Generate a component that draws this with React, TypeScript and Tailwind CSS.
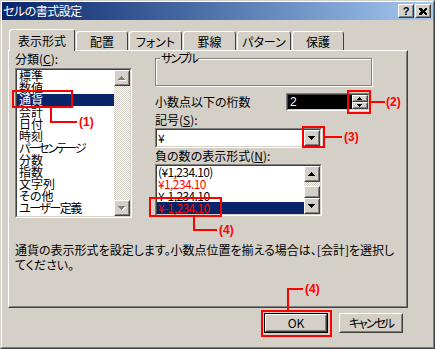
import React from 'react'

const font = "font-['Noto_Sans_CJK_JP','Noto_Sans_CJK_SC',sans-serif] [font-feature-settings:'palt']"
const checker =
  'bg-[image:repeating-conic-gradient(#ffffff_0%_25%,#d4d0c8_0%_50%)] bg-[length:2px_2px]'

function Raised({ className = '', children }: { className?: string; children?: React.ReactNode }) {
  return (
    <div className={`border border-t-white border-l-white border-r-[#404040] border-b-[#404040] bg-[#d4d0c8] ${className}`}>
      <div className="w-full h-full border border-transparent border-r-[#808080] border-b-[#808080] flex items-center justify-center">
        {children}
      </div>
    </div>
  )
}

function Sunken({ className = '', inner = '', children }: { className?: string; inner?: string; children?: React.ReactNode }) {
  return (
    <div className={`border border-t-[#808080] border-l-[#808080] border-r-white border-b-white ${className}`}>
      <div className={`w-full h-full border border-t-[#404040] border-l-[#404040] border-r-[#d4d0c8] border-b-[#d4d0c8] ${inner}`}>
        {children}
      </div>
    </div>
  )
}

function Arrow({ dir, disabled = false, small = false }: { dir: 'up' | 'down'; disabled?: boolean; small?: boolean }) {
  const w = small ? 5 : 7
  const h = small ? 3 : 4
  const pts = dir === 'up' ? `0,${h} ${w},${h} ${w / 2},0` : `0,0 ${w},0 ${w / 2},${h}`
  return (
    <svg width={w + 1} height={h + 1} viewBox={`0 0 ${w + 1} ${h + 1}`} shapeRendering="crispEdges">
      {disabled && <polygon points={pts} transform="translate(1,1)" fill="#ffffff" />}
      <polygon points={pts} fill={disabled ? '#808080' : '#000000'} />
    </svg>
  )
}

function Redbox({ className }: { className: string }) {
  return <div className={`absolute border-2 border-[#ff0000] ${className}`} />
}

function Line({ className }: { className: string }) {
  return <div className={`absolute bg-[#ff0000] ${className}`} />
}

function Tag({ className, n }: { className: string; n: number }) {
  return (
    <div className={`absolute font-['Liberation_Sans',sans-serif] font-bold text-[12px] leading-[14px] text-[#ff0000] ${className}`}>
      ({n})
    </div>
  )
}

// kana-heavy entries are squeezed a little, the original bitmap font sets kana narrow
const categories = [
  { t: '標準' },
  { t: '数値' },
  { t: '通貨', selected: true },
  { t: '会計' },
  { t: '日付' },
  { t: '時刻' },
  { t: 'パーセンテージ', tight: 'tracking-[-2px]' },
  { t: '分数' },
  { t: '指数' },
  { t: '文字列' },
  { t: 'その他' },
  { t: 'ユーザー定義', tight: 'tracking-[-1.5px]' },
]

const negatives = [
  { text: '(¥1,234.10)', red: false },
  { text: '¥1,234.10', red: true },
  { text: '¥-1,234.10', red: false },
  { text: '¥-1,234.10', red: true, selected: true },
]

export default function App() {
  return (
    <div className={`relative w-[435px] h-[349px] overflow-hidden bg-[#d4d0c8] text-[12px] text-black ${font}`}>
      <div className="w-full h-full border border-t-[#d4d0c8] border-l-[#d4d0c8] border-r-[#404040] border-b-[#404040]">
        <div className="w-full h-full border border-t-white border-l-white border-r-[#808080] border-b-[#808080]">
          {/* Title bar */}
          <div className="h-[18px] flex items-center bg-gradient-to-r from-[#0a246a] to-[#a6caf0] pl-[1px] pr-[2px]">
            <span className="text-white text-[12px] leading-[18px] tracking-[-0.5px]">セルの書式設定</span>
            <div className="ml-auto flex gap-[1px]">
              <Raised className="w-[16px] h-[14px]">
                <span className="font-['Liberation_Sans',sans-serif] font-bold text-[11px] leading-[10px]">?</span>
              </Raised>
              <Raised className="w-[16px] h-[14px]">
                <svg width="8" height="7" viewBox="0 0 8 7" shapeRendering="crispEdges">
                  <path d="M0 0h2l2 2 2-2h2v1L6 3.5 8 6v1H6L4 5 2 7H0V6l2-2.5L0 1z" fill="#000" />
                </svg>
              </Raised>
            </div>
          </div>

          <div className="pl-[6px] pt-[9px]">
            {/* Tabs */}
            <div className="relative z-10 flex items-end gap-[1px] h-[21px]">
              <div className="ml-[1px] w-[66px] h-[22px] -mb-[1px] bg-[#d4d0c8] border-t border-l border-white border-r border-r-[#404040] rounded-t-[3px] flex justify-center pt-[4px] leading-[14px]">
                表示形式
              </div>
              {[
                ['配置', 'w-[52px]'],
                ['フォント', 'w-[53px]'],
                ['罫線', 'w-[53px]'],
                ['パターン', 'w-[54px]'],
                ['保護', 'w-[52px]'],
              ].map(([t, w]) => (
                <div
                  key={t}
                  className={`${w} h-[19px] border-t border-l border-white border-r border-r-[#404040] rounded-t-[3px] flex justify-center pt-[3px] leading-[14px]`}
                >
                  {t}
                </div>
              ))}
            </div>

            {/* Panel */}
            <div className="w-[400px] h-[258px] border border-t-white border-l-white border-r-[#404040] border-b-[#404040]">
              <div className="w-full h-full border border-transparent border-r-[#808080] border-b-[#808080] pl-[5px]">
                <div className="flex gap-[23px]">
                  {/* Left column */}
                  <div className="w-[117px]">
                    <div className="h-[16px] leading-[14px]">
                      分類(<span className="underline">C</span>):
                    </div>
                    <Sunken className="h-[150px]" inner="bg-white flex">
                      <div className="flex-1 flex flex-col">
                        {categories.map((c) => (
                          <div
                            key={c.t}
                            className={`h-[12px] leading-[12px] pl-[2px] whitespace-nowrap ${c.tight ?? ''} ${c.selected ? 'bg-[#0a246a] text-white' : ''}`}
                          >
                            {c.t}
                          </div>
                        ))}
                      </div>
                      <div className="w-[16px] flex flex-col">
                        <Raised className="h-[16px]">
                          <Arrow dir="up" disabled />
                        </Raised>
                        <div className={`flex-1 ${checker}`} />
                        <Raised className="h-[16px]">
                          <Arrow dir="down" disabled />
                        </Raised>
                      </div>
                    </Sunken>
                  </div>

                  {/* Right column */}
                  <div className="w-[217px]">
                    <div className="relative mt-[6px] h-[28px] border border-[#808080] shadow-[1px_1px_0_#ffffff,inset_1px_1px_0_#ffffff]">
                      <span className="absolute -top-[7px] left-[4px] bg-[#d4d0c8] px-[1px] leading-[12px] tracking-[-2px]">サンプル</span>
                    </div>

                    <div className="mt-[7px] flex items-center pr-[2px]">
                      <span className="leading-[14px]">小数点以下の桁数</span>
                      <Sunken className="ml-auto w-[84px] h-[18px]" inner="bg-black flex items-center">
                        <span className="flex-1 pl-[2px] text-white leading-[12px] font-['Liberation_Sans',sans-serif]">2</span>
                        <div className="w-[16px] h-full flex flex-col">
                          <Raised className="h-[7px]">
                            <Arrow dir="up" small />
                          </Raised>
                          <Raised className="h-[7px]">
                            <Arrow dir="down" small />
                          </Raised>
                        </div>
                      </Sunken>
                    </div>

                    <div className="mt-[1px] h-[16px] leading-[16px]">
                      記号(<span className="underline">S</span>):
                    </div>
                    <Sunken className="w-[167px] h-[20px]" inner="bg-white flex items-center">
                      <span className="flex-1 pl-[1px] leading-[12px]">¥</span>
                      <Raised className="w-[16px] h-[16px]">
                        <Arrow dir="down" />
                      </Raised>
                    </Sunken>

                    <div className="h-[16px] leading-[16px]">
                      負の数の表示形式(<span className="underline">N</span>):
                    </div>
                    <Sunken className="w-[167px] h-[52px]" inner="bg-white flex">
                      <div className="flex-1 flex flex-col">
                        {negatives.map((n, i) => (
                          <div
                            key={i}
                            className={`h-[12px] leading-[12px] pl-[1px] tracking-[-0.6px] ${n.selected ? 'bg-[#0a246a]' : ''} ${n.red ? 'text-[#ff0000]' : 'text-black'}`}
                          >
                            {n.text}
                          </div>
                        ))}
                      </div>
                      <div className="w-[16px] flex flex-col">
                        <Raised className="h-[16px]">
                          <Arrow dir="up" />
                        </Raised>
                        <div className={`h-[4px] ${checker}`} />
                        <Raised className="h-[12px]" />
                        <Raised className="h-[16px]">
                          <Arrow dir="down" />
                        </Raised>
                      </div>
                    </Sunken>
                  </div>
                </div>

                <p className="mt-[24px] leading-[15px]">
                  通貨の表示形式を設定します。小数点位置を揃える場合は、[会計]を選択し
                  <br />
                  てください。
                </p>
              </div>
            </div>

            {/* Buttons */}
            <div className="w-[400px] flex justify-end gap-[11px] pr-[5px] mt-[5px]">
              <div className="w-[64px] h-[20px] border border-black">
                <Raised className="w-full h-full">
                  <span className="leading-[12px]">OK</span>
                </Raised>
              </div>
              <Raised className="w-[64px] h-[20px]">
                <span className="leading-[12px] tracking-[-2px]">キャンセル</span>
              </Raised>
            </div>
          </div>
        </div>
      </div>

      {/* Annotations */}
      <Redbox className="left-[11px] top-[31px] w-[62px] h-[20px]" />

      <Redbox className="left-[12px] top-[90px] w-[61px] h-[18px]" />
      <Line className="left-[50px] top-[107px] w-[2px] h-[16px]" />
      <Line className="left-[50px] top-[121px] w-[27px] h-[2px]" />
      <Tag className="left-[79px] top-[115px]" n={1} />

      <Redbox className="left-[347px] top-[90px] w-[24px] h-[24px]" />
      <Line className="left-[371px] top-[101px] w-[14px] h-[2px]" />
      <Tag className="left-[386px] top-[95px]" n={2} />

      <Redbox className="left-[302px] top-[126px] w-[23px] h-[22px]" />
      <Line className="left-[325px] top-[136px] w-[17px] h-[2px]" />
      <Tag className="left-[344px] top-[130px]" n={3} />

      <Redbox className="left-[149px] top-[197px] w-[73px] h-[20px]" />
      <Line className="left-[193px] top-[216px] w-[2px] h-[15px]" />
      <Line className="left-[193px] top-[229px] w-[24px] h-[2px]" />
      <Tag className="left-[219px] top-[223px]" n={4} />

      <Redbox className="left-[261px] top-[310px] w-[71px] h-[27px]" />
      <Line className="left-[287px] top-[288px] w-[2px] h-[22px]" />
      <Line className="left-[287px] top-[288px] w-[16px] h-[2px]" />
      <Tag className="left-[305px] top-[282px]" n={4} />
    </div>
  )
}
